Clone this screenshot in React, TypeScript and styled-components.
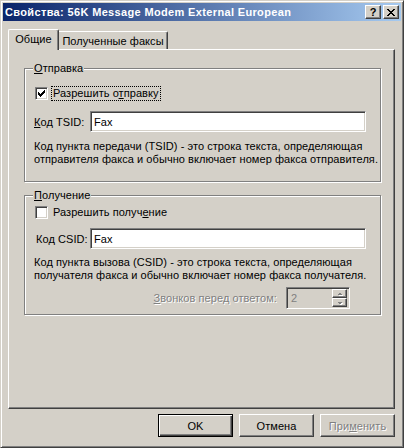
import React from 'react';
import styled, { createGlobalStyle } from 'styled-components';

const FACE = '#d4d0c8';
const SHADOW = '#808080';
const DARK = '#404040';

const GlobalStyle = createGlobalStyle`
  html, body {
    margin: 0;
    padding: 0;
    background: ${FACE};
  }
  body {
    font-family: 'Liberation Sans', Arial, sans-serif;
    font-size: 11px;
    letter-spacing: 0.06px;
    color: #000;
  }
`;

const Window = styled.div`
  width: 404px;
  height: 448px;
  box-sizing: border-box;
  background: ${FACE};
  border: 1px solid;
  border-color: ${FACE} ${DARK} ${DARK} ${FACE};
  box-shadow: inset 1px 1px #fff, inset -1px -1px ${SHADOW};
  padding: 2px;
  display: flex;
  flex-direction: column;
`;

const TitleBar = styled.div`
  height: 18px;
  display: flex;
  align-items: center;
  padding: 0 2px 0 2px;
  background: linear-gradient(to right, #0a246a, #a6caf0);
`;

const Caption = styled.div`
  flex: 1;
  color: #fff;
  font-weight: bold;
  font-size: 11px;
  letter-spacing: 0.35px;
  white-space: nowrap;
`;

const CaptionButton = styled.div<{ $gap?: number }>`
  width: 16px;
  height: 14px;
  box-sizing: border-box;
  margin-left: ${(p) => p.$gap ?? 0}px;
  background: ${FACE};
  border: 1px solid;
  border-color: #fff ${DARK} ${DARK} #fff;
  box-shadow: inset -1px -1px ${SHADOW};
  display: flex;
  align-items: center;
  justify-content: center;
  font-weight: bold;
  font-size: 11px;
  line-height: 12px;
  letter-spacing: 0;
`;

const Body = styled.div`
  flex: 1;
  display: flex;
  flex-direction: column;
  padding: 8px 6px 0 5px;
`;

const TabStrip = styled.div`
  height: 20px;
  display: flex;
  align-items: flex-end;
`;

const Tab = styled.div<{ $active?: boolean; $w: number }>`
  width: ${(p) => p.$w}px;
  height: ${(p) => (p.$active ? 21 : 18)}px;
  margin-bottom: ${(p) => (p.$active ? -1 : 0)}px;
  position: relative;
  z-index: ${(p) => (p.$active ? 1 : 0)};
  box-sizing: border-box;
  background: ${FACE};
  border-top: 1px solid #fff;
  border-left: ${(p) => (p.$active ? '1px solid #fff' : 'none')};
  border-right: 1px solid ${DARK};
  border-radius: ${(p) => (p.$active ? '2px 2px 0 0' : '0 2px 0 0')};
  box-shadow: inset -1px 0 ${SHADOW};
  display: flex;
  align-items: ${(p) => (p.$active ? 'flex-start' : 'center')};
  padding-top: ${(p) => (p.$active ? 3 : 0)}px;
  justify-content: center;
  white-space: nowrap;
`;

const Panel = styled.div`
  width: 387px;
  height: 360px;
  box-sizing: border-box;
  border-top: 1px solid #fff;
  border-left: 1px solid #fff;
  border-right: 1px solid ${DARK};
  border-bottom: 1px solid ${DARK};
  box-shadow: inset -1px -1px ${SHADOW};
  padding: 12px 0 0 15px;
`;

const Group = styled.fieldset<{ $top?: number; $bottom: number }>`
  width: 357px;
  box-sizing: border-box;
  min-width: 0;
  margin: ${(p) => p.$top ?? 0}px 0 0 0;
  padding: 0 0 ${(p) => p.$bottom}px 8px;
  border: 1px solid ${SHADOW};
  box-shadow: inset 1px 1px #fff, 1px 1px #fff;
`;

const Legend = styled.legend`
  padding: 0 1px;
  line-height: 13px;
  background: ${FACE};
`;

const Key = styled.span`
  text-decoration: underline;
  text-underline-offset: 1px;
`;

const CheckRow = styled.div<{ $top: number }>`
  margin-top: ${(p) => p.$top}px;
  margin-left: 2px;
  height: 15px;
  display: flex;
  align-items: center;
  gap: 4px;
`;

const CheckBox = styled.div`
  width: 13px;
  height: 13px;
  box-sizing: border-box;
  background: #fff;
  border: 1px solid;
  border-color: ${SHADOW} #fff #fff ${SHADOW};
  box-shadow: inset 1px 1px ${DARK}, inset -1px -1px ${FACE};
  display: flex;
  align-items: center;
  justify-content: center;
`;

const CheckLabel = styled.span<{ $focus?: boolean }>`
  line-height: 13px;
  padding: 0 1px;
  outline: ${(p) => (p.$focus ? '1px dotted #000' : 'none')};
  outline-offset: 0;
`;

const FieldRow = styled.div<{ $top: number }>`
  margin-top: ${(p) => p.$top}px;
  display: flex;
  align-items: center;
`;

const FieldLabel = styled.span<{ $indent: number }>`
  width: ${(p) => 57 - p.$indent}px;
  padding-left: ${(p) => p.$indent}px;
  white-space: nowrap;
`;

const TextBox = styled.div`
  width: 276px;
  height: 21px;
  box-sizing: border-box;
  background: #fff;
  border: 1px solid;
  border-color: ${SHADOW} #fff #fff ${SHADOW};
  box-shadow: inset 1px 1px ${DARK}, inset -1px -1px ${FACE};
  padding: 0 3px;
  display: flex;
  align-items: center;
`;

const Note = styled.div<{ $top: number }>`
  margin-top: ${(p) => p.$top}px;
  margin-left: 1px;
  line-height: 13px;
  white-space: nowrap;
`;

const RingsRow = styled.div`
  margin-top: 5px;
  display: flex;
  align-items: center;
  justify-content: flex-end;
  padding-right: 30px;
  gap: 9px;
`;

const Disabled = styled.span`
  color: ${SHADOW};
  text-shadow: 1px 1px #fff;
  white-space: nowrap;
`;

const Spinner = styled.div`
  width: 64px;
  height: 22px;
  box-sizing: border-box;
  background: ${FACE};
  border: 1px solid;
  border-color: ${SHADOW} #fff #fff ${SHADOW};
  box-shadow: inset 1px 1px ${DARK}, inset -1px -1px ${FACE};
  padding: 2px 2px 2px 4px;
  display: flex;
  align-items: center;
`;

const SpinValue = styled.span`
  flex: 1;
  color: ${SHADOW};
`;

const SpinButtons = styled.div`
  width: 15px;
  height: 18px;
  display: flex;
  flex-direction: column;
`;

const SpinButton = styled.div`
  flex: 1;
  box-sizing: border-box;
  border: 1px solid;
  border-color: #fff ${DARK} ${DARK} #fff;
  box-shadow: inset -1px -1px ${SHADOW};
  display: flex;
  align-items: center;
  justify-content: center;
`;

const ButtonRow = styled.div`
  margin-top: 5px;
  display: flex;
  justify-content: flex-end;
  gap: 6px;
`;

const Button = styled.div<{ $default?: boolean; $disabled?: boolean }>`
  width: 75px;
  height: 23px;
  box-sizing: border-box;
  display: flex;
  align-items: center;
  justify-content: center;
  border: 1px solid;
  border-color: ${(p) => (p.$default ? '#000' : `#fff ${DARK} ${DARK} #fff`)};
  box-shadow: ${(p) =>
    p.$default
      ? `inset 1px 1px #fff, inset -1px -1px ${DARK}, inset -2px -2px ${SHADOW}`
      : `inset -1px -1px ${SHADOW}`};
  color: ${(p) => (p.$disabled ? SHADOW : '#000')};
  text-shadow: ${(p) => (p.$disabled ? '1px 1px #fff' : 'none')};
`;

const CloseGlyph = () => {
  const rows = ['##....##', '.##..##.', '..####..', '...##...', '..####..', '.##..##.', '##....##'];
  return (
    <svg width="8" height="7" viewBox="0 0 8 7" shapeRendering="crispEdges">
      {rows.map((r, y) =>
        r.split('').map((c, x) => (c === '#' ? <rect key={`${x}-${y}`} x={x} y={y} width="1" height="1" fill="#000" /> : null)),
      )}
    </svg>
  );
};

const CheckMark = () => (
  <svg width="7" height="7" viewBox="0 0 7 7" shapeRendering="crispEdges">
    <path d="M0 2H1V3H2V4H3V3H4V2H5V1H6V0H7V3H6V4H5V5H4V6H3V7H2V6H1V5H0Z" fill="#000" />
  </svg>
);

const Arrow = ({ up }: { up?: boolean }) => (
  <svg width="6" height="4" viewBox="0 0 6 4" shapeRendering="crispEdges">
    <path d={up ? 'M3 1H4V2H5V3H1V2H2V1Z' : 'M1 1H5V2H4V3H2V2H1Z'} fill="#fff" transform="translate(1 1)" />
    <path d={up ? 'M2 0H3V1H4V2H0V1H1V0Z' : 'M0 0H4V1H3V2H1V1H0Z'} fill={SHADOW} transform="translate(1 1)" />
  </svg>
);

const App = () => (
  <>
    <GlobalStyle />
    <Window>
      <TitleBar>
        <Caption>Свойства: 56K Message Modem External European</Caption>
        <CaptionButton>?</CaptionButton>
        <CaptionButton $gap={2}>
          <CloseGlyph />
        </CaptionButton>
      </TitleBar>
      <Body>
        <TabStrip>
          <Tab $active $w={51}>
            Общие
          </Tab>
          <Tab $w={109}>Полученные факсы</Tab>
        </TabStrip>
        <Panel>
          <Group $bottom={15}>
            <Legend>
              <Key>О</Key>тправка
            </Legend>
            <CheckRow $top={11}>
              <CheckBox>
                <CheckMark />
              </CheckBox>
              <CheckLabel $focus>
                Разрешить о<Key>т</Key>правку
              </CheckLabel>
            </CheckRow>
            <FieldRow $top={10}>
              <FieldLabel $indent={1}>
                <Key>К</Key>од TSID:
              </FieldLabel>
              <TextBox>Fax</TextBox>
            </FieldRow>
            <Note $top={8}>
              Код пункта передачи (TSID) - это строка текста, определяющая
              <br />
              отправителя факса и обычно включает номер факса отправителя.
            </Note>
          </Group>
          <Group $top={7} $bottom={5}>
            <Legend>
              <Key>П</Key>олучение
            </Legend>
            <CheckRow $top={3}>
              <CheckBox />
              <CheckLabel>
                Разрешить получ<Key>е</Key>ние
              </CheckLabel>
            </CheckRow>
            <FieldRow $top={8}>
              <FieldLabel $indent={3}>
                Ко<Key>д</Key> CSID:
              </FieldLabel>
              <TextBox>Fax</TextBox>
            </FieldRow>
            <Note $top={7}>
              Код пункта вызова (CSID) - это строка текста, определяющая
              <br />
              получателя факса и обычно включает номер факса получателя.
            </Note>
            <RingsRow>
              <Disabled>
                <Key>З</Key>вонков перед ответом:
              </Disabled>
              <Spinner>
                <SpinValue>2</SpinValue>
                <SpinButtons>
                  <SpinButton>
                    <Arrow up />
                  </SpinButton>
                  <SpinButton>
                    <Arrow />
                  </SpinButton>
                </SpinButtons>
              </Spinner>
            </RingsRow>
          </Group>
        </Panel>
        <ButtonRow>
          <Button $default>OK</Button>
          <Button>Отмена</Button>
          <Button $disabled>
            При<Key>м</Key>енить
          </Button>
        </ButtonRow>
      </Body>
    </Window>
  </>
);

export default App;
